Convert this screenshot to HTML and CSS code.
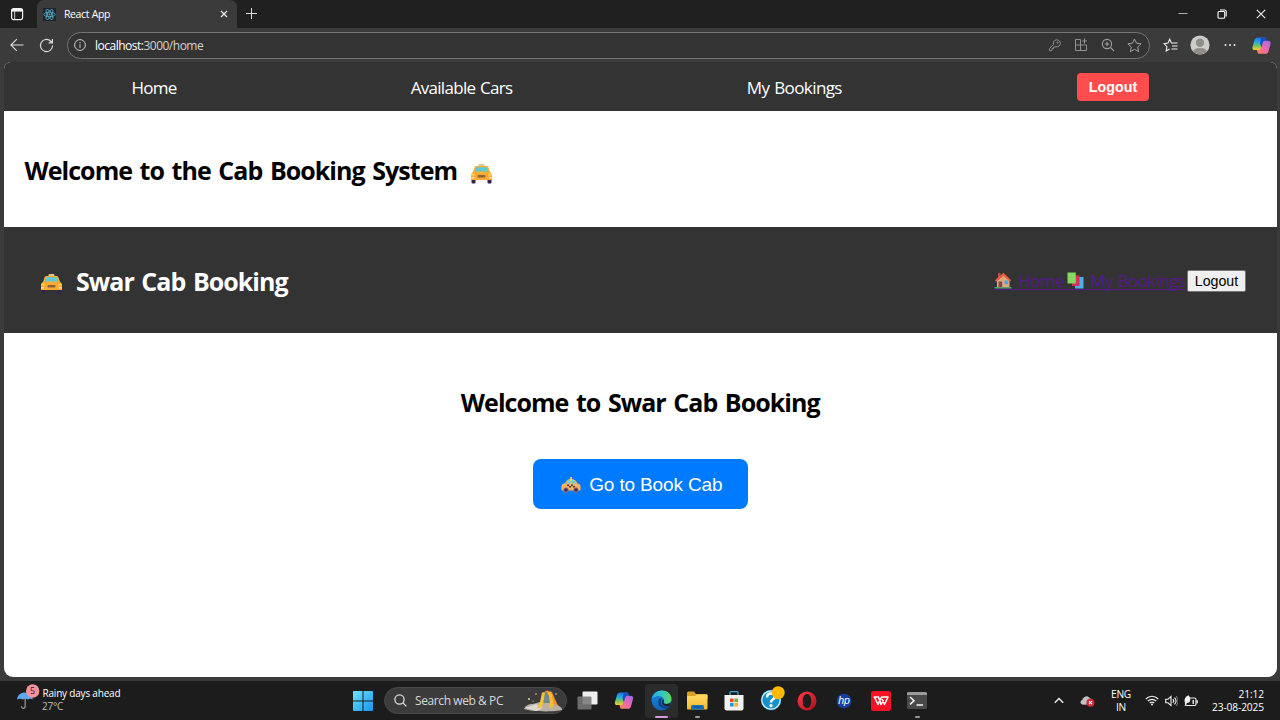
FILE: index.html
```html
<!DOCTYPE html>
<html lang="en">
<head>
<meta charset="utf-8">
<title>React App</title>
<link rel="stylesheet" href="styles.css">
</head>
<body>
<svg width="0" height="0" class="defs">
  <defs>
    <linearGradient id="cpA" x1="0" y1="0" x2="0" y2="1"><stop offset="0" stop-color="#1b72e0"/><stop offset=".35" stop-color="#22a9e8"/><stop offset=".65" stop-color="#6fc55c"/><stop offset="1" stop-color="#f9d02c"/></linearGradient>
    <linearGradient id="cpB" x1="1" y1="0" x2="0" y2="1"><stop offset="0" stop-color="#9a68f2"/><stop offset=".5" stop-color="#ee66b0"/><stop offset="1" stop-color="#ff8a4c"/></linearGradient>
    <linearGradient id="edgeA" x1="0" y1="0" x2="1" y2="0"><stop offset="0" stop-color="#2aa6e6"/><stop offset=".5" stop-color="#31c6c8"/><stop offset="1" stop-color="#63d65b"/></linearGradient>
    <linearGradient id="edgeB" x1="0" y1="0" x2="0" y2="1"><stop offset="0" stop-color="#1d8ede"/><stop offset="1" stop-color="#1261b5"/></linearGradient>
    <linearGradient id="win" x1="0" y1="0" x2="1" y2="1"><stop offset="0" stop-color="#72e2fb"/><stop offset="1" stop-color="#1296ed"/></linearGradient>
    <linearGradient id="folder" x1="0" y1="0" x2="0" y2="1"><stop offset="0" stop-color="#ffdc65"/><stop offset="1" stop-color="#f7b92d"/></linearGradient>
    <linearGradient id="opera" x1="0" y1="0" x2="1" y2="1"><stop offset="0" stop-color="#ff3b45"/><stop offset="1" stop-color="#a90e1c"/></linearGradient>
    <symbol id="copilot" viewBox="0 0 20 20">
      <path d="M6 1.500h6.500c1.200 0 1.800.5 2.100 1.500l.5 2h-1.600c-1.200 0-1.800.6-2.100 1.800L9.800 12.500C9.400 14 8.500 14.800 7 14.800H3C.8 14.800 0 13.500.5 11.500L2.600 4.200C3.100 2.400 4.200 1.500 6 1.500Z" fill="url(#cpA)"/>
      <path d="M14 18.800H8c-1.200 0-1.900-.6-2.200-1.700l-.6-2.300h1.700c1.300 0 2-.7 2.400-2.100l1.700-5.600C11.400 5.700 12.400 5 13.700 5H17c2.200 0 3 1.500 2.500 3.500l-2.100 7.500c-.5 1.800-1.600 2.800-3.400 2.800Z" fill="url(#cpB)"/>
      <path d="M9.500 1.500h3c1.200 0 1.800.5 2.100 1.500l.5 2h-1.400c-1.200 0-2 .6-2.400 1.800L9.900 12 8.500 8Z" fill="#1b4fc4"/>
    </symbol>
    <symbol id="cabfront" viewBox="0 0 22 20">
      <rect x="8" y="0" width="6" height="3" rx="1" fill="#e8c48c"/>
      <path d="M6 2h10c1 0 1.500.5 2 1.500L19.500 8h-17L4 3.500C4.500 2.500 5 2 6 2Z" fill="#f3ae3d"/>
      <path d="M6.200 3.300h9.600L18 8H4Z" fill="#5ccbd3"/>
      <rect x="1" y="15" width="4" height="4.500" rx="1" fill="#33244e"/><rect x="17" y="15" width="4" height="4.500" rx="1" fill="#33244e"/>
      <path d="M3 7.500h16c1.700 1 2.500 2.500 2.500 4.500v4H.5v-4c0-2 .8-3.500 2.500-4.500Z" fill="#fbab33"/>
      <rect x="7" y="11" width="8" height="2.600" rx="1" fill="#88653f"/>
      <path d="M1 9.500h3v2H.7ZM18 9.500h3l.3 2H18Z" fill="#ffd84e"/>
      <path d="M.7 13h3v1.500h-3ZM18.300 13h3v1.500h-3Z" fill="#f5d9c9"/>
    </symbol>
  </defs>
</svg>

<div class="browser">
  <header class="tabstrip">
    <div class="workspace"><svg width="14" height="14" viewBox="0 0 14 14" fill="none" stroke="#f2f2f2" stroke-width="1.200"><rect x="1.600" y="1.600" width="11" height="11" rx="2"/><path d="M2 3.300h10.400" stroke-width="2.600"/><path d="M4.700 4v8.500" stroke-width=".8"/></svg></div>
    <div class="tab">
      <svg width="13" height="13" viewBox="0 0 13 13" fill="none" stroke="#58bcd8" stroke-width=".8"><rect width="13" height="13" fill="#20262d" stroke="none"/><ellipse cx="6.500" cy="6.500" rx="5.600" ry="2.200"/><ellipse cx="6.500" cy="6.500" rx="5.600" ry="2.200" transform="rotate(60 6.500 6.500)"/><ellipse cx="6.500" cy="6.500" rx="5.600" ry="2.200" transform="rotate(120 6.500 6.500)"/><circle cx="6.500" cy="6.500" r=".9" fill="#58bcd8" stroke="none"/></svg>
      <span class="tab-title">React App</span>
      <svg class="tab-close" width="8" height="8" viewBox="0 0 8 8" stroke="#eee" stroke-width="1.200"><path d="M1 1l6 6M7 1l-6 6"/></svg>
    </div>
    <svg class="newtab" width="12" height="12" viewBox="0 0 12 12" stroke="#ddd"><path d="M5.500 0v11M0 5.500h11"/></svg>
    <div class="window-buttons">
      <svg width="10" height="10" viewBox="0 0 10 10" stroke="#aaa"><path d="M.5 4.500h9"/></svg>
      <svg width="10" height="10" viewBox="0 0 10 10" fill="none" stroke="#fff" stroke-width="1.100"><rect x="1" y="2.500" width="6.700" height="6.700" rx="1"/><path d="M3 1h4.800Q9.200 1 9.200 2.500V7.500"/></svg>
      <svg width="10" height="10" viewBox="0 0 10 10" stroke="#eee" stroke-width="1.100"><path d="M.8.8l8.400 8.400M9.200.8L.8 9.200"/></svg>
    </div>
  </header>

  <div class="toolbar">
    <svg width="14" height="14" viewBox="0 0 14 14" fill="none" stroke="#ddd" stroke-width="1.100"><path d="M13.500 7H.9M6.800 1.200L.9 7l5.900 5.800"/></svg>
    <svg class="reload" width="15" height="15" viewBox="0 0 15 15" fill="none" stroke="#ddd" stroke-width="1.200"><path d="M13.600 7.500A6.100 6.100 0 1 1 11.800 3.200L13.300 4.600M13.400 1v3.800H9.600"/></svg>
    <div class="address">
      <svg width="12" height="12" viewBox="0 0 12 12" fill="none" stroke="#ccc"><circle cx="6" cy="6" r="5.400"/><path d="M6 5.300v3.500M6 3.200v1.100"/></svg>
      <span class="url">localhost:<span class="path">3000/home</span></span>
      <div class="address-icons">
        <svg width="14" height="14" viewBox="0 0 14 14" fill="none" stroke="#909090"><path d="M5.500 6.400A3.500 3.500 0 1 1 8 8.700L6.800 9H5.600v1.500H4.200V12l-.6.700H1.500v-2.200Z"/><circle cx="9.500" cy="4.600" r=".6"/></svg>
        <svg width="14" height="14" viewBox="0 0 14 14" fill="none" stroke="#909090"><path d="M6.500 1.500h-5v11h11V7H1.500M6.500 1.500v11M12.500 7v5.500M10.500.5v5M8 3h5"/></svg>
        <svg width="14" height="14" viewBox="0 0 14 14" fill="none" stroke="#a0a0a0" stroke-width="1.100"><circle cx="6" cy="6" r="4.600"/><path d="M9.500 9.500l3.600 3.600M3.700 6h4.600M6 3.700v4.600"/></svg>
        <svg width="15" height="15" viewBox="0 0 15 15" fill="none" stroke="#a0a0a0"><path d="M7.500 1l2 4.200 4.600.6-3.400 3.200.9 4.600-4.100-2.300-4.100 2.300.9-4.600L.9 5.800l4.600-.6Z" stroke-linejoin="round"/></svg>
      </div>
    </div>
    <div class="toolbar-right">
      <svg width="16" height="15" viewBox="0 0 16 15" fill="none" stroke="#eee" stroke-width="1.100"><path d="M8.500 5L6.700 1.200 5 5l-4 .6 2.900 3-.7 4.400L6.500 11M8.200 5h6.300M9 8h5.500M8.500 11h6"/></svg>
      <svg class="avatar" width="20" height="20" viewBox="0 0 20 20"><circle cx="10" cy="10" r="9.600" fill="#cfcdca"/><circle cx="10" cy="7.700" r="4.200" fill="#918e8a"/><path d="M3 16.200C4 13.700 6.500 13 10 13s6 .7 7 3.200a9.500 9.500 0 0 1-14 0Z" fill="#918e8a"/></svg>
      <svg width="12" height="4" viewBox="0 0 12 4" fill="#eee"><circle cx="1.500" cy="2" r="1"/><circle cx="6" cy="2" r="1"/><circle cx="10.500" cy="2" r="1"/></svg>
      <svg class="copilot-button" width="19" height="19"><use href="#copilot"/></svg>
    </div>
  </div>

  <main class="page">
    <nav class="nav">
      <a class="nav-home">Home</a><a class="nav-cars">Available Cars</a><a class="nav-bookings">My Bookings</a>
      <button class="logout">Logout</button>
    </nav>
    <section class="intro">
      <h2 class="intro-title">Welcome to the Cab Booking System</h2>
      <svg width="23" height="20"><use href="#cabfront"/></svg>
    </section>
    <section class="brandbar">
      <svg width="23" height="20"><use href="#cabfront"/></svg>
      <h2 class="brand">Swar Cab Booking</h2>
      <div class="links">
        <a class="link link-home"><svg width="18" height="17" viewBox="0 0 18 17"><path d="M4 1h2.500v5H4Z" fill="#b5563c"/><path d="M3 7l6-5 6.500 5v8.500H3Z" fill="#e2a77e"/><path d="M.8 8.500L9.500.8 17.300 8.500l-1.500 1L9.500 4 2.300 9.700Z" fill="#e65f3d"/><path d="M4.500 9.500h3.700v6H4.500Z" fill="#854b43"/><path d="M10.500 8.500h3.700v3.700h-3.700Z" fill="#4ca9de"/><path d="M.5 15h17v1.500H.5Z" fill="#55a56b"/></svg><span class="link-text">Home</span></a>
        <a class="link link-book"><svg width="17" height="17" viewBox="0 0 17 17"><path d="M8 5h8.500v11.500H8Z" fill="#49aee9"/><path d="M5 3.500h7.500V14H5Z" fill="#d63059"/><path d="M.5.500h8.300v11H.5Z" fill="#86d863"/></svg><span class="link-text">My Bookings</span></a>
        <button class="plain-logout">Logout</button>
      </div>
    </section>
    <section class="hero">
      <h2 class="hero-title">Welcome to Swar Cab Booking</h2>
      <button class="book">
        <svg width="20" height="16" viewBox="0 0 20 16"><path d="M4 7c1-3.500 2.500-5 6-5s5.500 1.500 6.500 5Z" fill="#f2b34d"/><path d="M5 7c1-2.800 2-3.800 4.500-4v4ZM10.900 3c2.500.2 3.600 1.500 4.500 4h-4.500Z" fill="#69d1dc"/><path d="M9.300 0h1.600v4H9.300Z" fill="#ffdf61"/><path d="M2.500 6.500h13.500c2 0 3 .8 3.500 2.500v4.500H.5V9q.3-2 2-2.500Z" fill="#f7b45f"/><path d="M6 7.500h2V9H6ZM10 7.500h2V9h-2ZM8 9h2v1.500H8ZM12 9h2v1.500h-2Z" fill="#473640"/><g fill="#3e3052" stroke="#a67d80"><circle cx="5" cy="13" r="2.300"/><circle cx="15" cy="13" r="2.300"/></g></svg>
        <span>Go to Book Cab</span>
      </button>
    </section>
  </main>
</div>

<footer class="taskbar">
  <div class="weather">
    <svg width="24" height="28" viewBox="0 0 24 28"><path d="M1 15.500C1.500 11 5 8.500 9 8.500s7.500 3 7.800 7c-2-1-3.500-1-5 0-1.700-1-3.400-1-5 0-2-1-3.800-1-5.800 0Z" fill="#5da7ee"/><path d="M9.200 14v8c0 3-3.700 3-3.700.3" fill="none" stroke="#929292" stroke-width="1.300"/><circle cx="16.700" cy="7" r="6.700" fill="#f7919d"/><text x="16.700" y="10.300" text-anchor="middle" class="badge-text">5</text></svg>
    <div class="weather-text"><span class="forecast">Rainy days ahead</span><span class="temp">27°C</span></div>
  </div>
  <div class="apps">
    <div class="app"><svg width="20" height="20" viewBox="0 0 20 20" fill="url(#win)"><path d="M0 1q0-1 1-1h8.500v9.500H0ZM10.500 0H19q1 0 1 1v8.500h-9.500ZM0 10.500h9.500V20H1q-1 0-1-1ZM10.500 10.500H20V19q0 1-1 1h-8.500Z"/></svg></div>
    <div class="search">
      <svg width="13" height="13" viewBox="0 0 13 13" fill="none" stroke="#ddd" stroke-width="1.300"><circle cx="5.500" cy="5.500" r="4.600"/><path d="M8.900 8.900l3.500 3.500"/></svg>
      <span class="search-text">Search web &amp; PC</span>
      <svg class="doodle" width="40" height="22" viewBox="0 0 40 22"><path d="M1 19c1-3 4-5 9-5l7-2 14 0 5 4c2 1 3 2 3 4-6 2-30 2-38-1Z" fill="#b9afa3"/><path d="M2 18l11-4 7 4-7 3Z" fill="#ded8cf"/><path d="M19 3l5-2.500L29 2l6 14-5-2-3-8Z" fill="#f0902f"/><path d="M19 3l5-1 4 11h-9Z" fill="#708794"/><path d="M19 2.500l3 .5-2 11-2 4h-4l3-6Z" fill="#f4c239"/><path d="M25 2l3 0 3 12-2 4h-3l1-5Z" fill="#f4bd35"/><g fill="#d7d0b8"><circle cx="6" cy="9" r="1"/><circle cx="13" cy="4" r=".8"/><circle cx="33" cy="4" r=".8"/><circle cx="10" cy="11" r=".6"/></g></svg>
    </div>
    <div class="app"><svg width="21" height="19" viewBox="0 0 21 19"><rect x="5.500" y=".5" width="15" height="13" rx="1" fill="#eee"/><rect x=".5" y="5.500" width="14" height="13" rx="1" fill="#777" opacity=".88"/></svg></div>
    <div class="app"><svg width="20" height="19"><use href="#copilot"/></svg></div>
    <div class="app active"><svg width="21" height="21" viewBox="0 0 21 21"><circle cx="10.500" cy="10.500" r="10" fill="url(#edgeB)"/><path d="M.6 9.500C1.500 3.500 6 .5 11 .5c6 0 9.500 4.200 9.500 8.500 0 3-2.200 5-5 5-2.400 0-3.500-1-2.500-2.200C14 10 12 6 8 6 4.500 6 1.500 7.500.6 9.500Z" fill="url(#edgeA)"/><path d="M8 9c-2 4 0 8.500 5 9.500 2.500.4 4.700-.6 6.300-2.300-2.400.8-9.300.8-9.300-4.700 0-1.200.7-2 1.300-2.500C10.500 8.300 9 8 8 9Z" fill="#0c438d"/><path d="M13 11.800c-1 1.200.1 2.200 2.500 2.200 2 0 3.500-.9 4.300-2.200l-.8 4c-3 1.500-8 0-8-4 0-1.400.7-2 1.200-2.200.9.300 1 1.500.8 2.200Z" fill="#202428"/></svg><i class="mark wide"></i></div>
    <div class="app"><svg width="21" height="19" viewBox="0 0 21 19"><path d="M0 2q0-1.500 1.500-1.500H7L9 3h10q1.500 0 1.500 1.500V8H0Z" fill="#dca022"/><path d="M0 6q0-1 1-1h7l2-1.500h9.500q1 0 1 1v13q0 1-1 1H1q-1 0-1-1Z" fill="url(#folder)"/><path d="M4 18.500v-3Q4 14 5.500 14h10q1.500 0 1.500 1.500v3Z" fill="#1673bb"/><path d="M6.500 16h8" stroke="#0b4c8a"/></svg><i class="mark"></i></div>
    <div class="app"><svg width="20" height="20" viewBox="0 0 20 20"><path d="M6 5V1.500q0-.8.800-.8h6.400q.8 0 .8.800V5" fill="none" stroke="#3ba7d4" stroke-width="1.300"/><path d="M.5 4h19v13.500q0 2-2 2h-15q-2 0-2-2Z" fill="#f2f2f2"/><path d="M6 7.500h3.600v3.600H6Z" fill="#ec5128"/><path d="M10.400 7.500H14v3.600h-3.600Z" fill="#7db52a"/><path d="M6 11.900h3.600v3.600H6Z" fill="#159bd7"/><path d="M10.400 11.900H14v3.600h-3.600Z" fill="#f4b51c"/></svg></div>
    <div class="app"><svg class="help" width="26" height="25" viewBox="0 0 26 25"><circle cx="12" cy="14" r="10.300" fill="#1691c9"/><circle cx="12" cy="14" r="9.200" fill="none" stroke="#d8eff8" stroke-width="1.200"/><path d="M8 11.500C8 8 10 7.500 12 7.500c4 0 5 4 1.700 6-1.500 1-1.700 1.500-1.700 3" fill="none" stroke="#fff" stroke-width="2.500"/><circle cx="12" cy="19.700" r="1.600" fill="#fff"/><circle cx="19.200" cy="6.700" r="6.500" fill="#ffb900"/></svg></div>
    <div class="app"><svg width="20" height="20" viewBox="0 0 20 20"><path fill-rule="evenodd" d="M10 .5a9.500 9.500 0 1 0 0 19 9.500 9.500 0 0 0 0-19Zm0 2.500c2.700 0 4.200 3 4.200 7s-1.500 7-4.200 7-4.200-3-4.200-7 1.500-7 4.200-7Z" fill="url(#opera)"/></svg></div>
    <div class="app"><svg width="16" height="16" viewBox="0 0 16 16"><circle cx="8" cy="8" r="7.300" fill="#173ea5"/><text x="8" y="11" text-anchor="middle" class="hp-text">hp</text></svg></div>
    <div class="app"><svg width="20" height="20" viewBox="0 0 20 20"><rect width="20" height="20" rx="2.500" fill="#f51225"/><path d="M2.500 6H7.500L10 13.500 12.500 9M3.500 6L7 13.500 10.500 6H17L13.500 13.500 11 8" fill="none" stroke="#fff" stroke-width="1.500" stroke-linejoin="round"/></svg></div>
    <div class="app"><svg width="20" height="17" viewBox="0 0 20 17"><rect width="20" height="17" rx="1.500" fill="#494949"/><path d="M0 3V1.500Q0 0 1.500 0h17Q20 0 20 1.500V3Z" fill="#9b9b9b"/><path d="M3 5l4 3.700-4 3.700M9.500 13H16" fill="none" stroke="#f5f5f5" stroke-width="1.500"/></svg><i class="mark"></i></div>
  </div>
  <div class="tray">
    <svg class="chevron" width="10" height="7" viewBox="0 0 10 7" fill="none" stroke="#eee" stroke-width="1.400"><path d="M.8 5.800L5 1.500l4.200 4.300"/></svg>
    <svg class="cloud" width="15" height="12" viewBox="0 0 15 12"><path d="M3 9.500C0 9.500-.1 5.600 2.500 5 3 1.300 8 .2 9.800 3.300c2 0 3 1.700 3 3.200v3Z" fill="#9a9a9a"/><path d="M2.500 5C3 1.300 8 .2 9.800 3.300 7 3.300 6 6 6.500 9.500H3C0 9.500-.1 5.600 2.500 5Z" fill="#c2c2c2"/><circle cx="10.500" cy="7.700" r="4" fill="#d02a37"/><path d="M9 6.200l3 3M12 6.200l-3 3" stroke="#fff" stroke-width="1.100"/></svg>
    <div class="lang"><span>ENG</span><span>IN</span></div>
    <div class="status">
      <svg width="14" height="11" viewBox="0 0 14 11" fill="none" stroke="#eee" stroke-width="1.200"><path d="M.8 4C4.300.3 9.700.3 13.200 4M2.800 6.200c2.400-2.500 6-2.500 8.400 0M4.800 8.200c1.300-1.300 3.100-1.300 4.400 0"/><circle cx="7" cy="9.600" r="1" fill="#eee" stroke="none"/></svg>
      <svg width="13" height="12" viewBox="0 0 13 12" fill="none" stroke="#eee" stroke-width="1.100"><path d="M.7 4.200H3L6 1.400v9.200L3 7.800H.7ZM7.800 4.200c1 1 1 2.600 0 3.600M9.500 2.700c1.800 1.900 1.800 4.700 0 6.600"/><path d="M11.200 1.200c2.200 2.800 2.200 6.800 0 9.600" stroke="#777"/></svg>
      <svg width="14" height="12" viewBox="0 0 14 12"><rect x="1.500" y="3" width="10.500" height="7.500" rx="1.500" fill="none" stroke="#eee" stroke-width="1.200"/><path d="M13.200 5.300v3" stroke="#eee" stroke-width="1.300"/><path d="M.5 6C.5 3.500 2 1.500 4.300.3 6.500 2.500 7 5.500 5 7.500 3 8.500 1 8 .5 6Z" fill="#f3f3f3"/><path d="M8.500 5H10v4H8.500Z" fill="#ddd"/><path d="M3.500 5.500L1 11" stroke="#eee"/></svg>
    </div>
    <div class="clock"><span class="time">21:12</span><span class="date">23-08-2025</span></div>
  </div>
</footer>
</body>
</html>
```
FILE: styles.css
```css
* { box-sizing: border-box; }
body { margin: 0; width: 1280px; height: 720px; overflow: hidden; display: flex; flex-direction: column; background: #1c1c1c; font-family: "Open Sans", "Noto Sans", sans-serif; color: #fff; }
svg { display: block; flex: none; }
span, a, h2 { white-space: nowrap; }
h2, button { margin: 0; }
.defs { position: absolute; }

.browser { height: 681px; display: flex; flex-direction: column; background: #3b3b3b; }
.tabstrip { height: 28px; display: flex; align-items: center; background: #202020; }
.workspace { width: 37px; height: 28px; display: flex; align-items: center; justify-content: center; padding-right: 3px; }
.tab { width: 200px; height: 28px; display: flex; align-items: center; padding: 0 9px 0 6px; background: #3b3b3b; border-radius: 7px 7px 0 0; }
.tab-title { margin-left: 8px; font-size: 10.5px; letter-spacing: -0.4px; word-spacing: 0.5px; }
.tab-close { margin-left: auto; }
.newtab { margin-left: 9px; }
.window-buttons { margin-left: auto; margin-right: 14px; display: flex; gap: 29px; }
.toolbar { height: 34px; display: flex; align-items: center; padding-left: 10px; }
.reload { margin-left: 15px; }
.address { width: 1083px; height: 27px; margin-left: 13px; padding: 0 7px 0 6px; display: flex; align-items: center; background: #333; border: 1px solid #757575; border-radius: 14px; }
.url { margin-left: 9px; font-size: 12px; letter-spacing: -0.5px; }
.path { color: #d2d2d2; }
.address-icons { margin-left: auto; display: flex; align-items: center; gap: 12.500px; }
.toolbar-right { display: flex; align-items: center; margin-left: 13px; }
.avatar { margin-left: 11px; margin-right: 14px; }
.copilot-button { margin-left: 16px; }

.page { width: 1273.500px; height: 615px; margin-left: 3.500px; overflow: hidden; background: #fff; border-radius: 7px 7px 9px 9px; color: #000; }
.nav { height: 49px; padding: 0 11px; display: flex; align-items: center; justify-content: space-around; background: #333; color: #fff; font-size: 17px; }
.nav a { display: block; padding-top: 1px; }
.nav-home { width: 45px; letter-spacing: -0.75px; }
.nav-cars { width: 102px; letter-spacing: -0.7px; word-spacing: 1px; }
.nav-bookings { width: 96px; letter-spacing: -0.6px; word-spacing: 1px; }
.logout { width: 72px; height: 28px; padding: 0; border: 0; border-radius: 4px; background: #ff4d4d; color: #fff; font: bold 14.300px "Liberation Sans", Arial, sans-serif; }
h2 { font-size: 25px; line-height: 36px; font-weight: 700; letter-spacing: -0.95px; word-spacing: 2px; }
.intro { height: 116px; padding: 41px 0 0 21px; display: flex; align-items: flex-start; }
.intro-title { width: 445.500px; }
.intro svg { margin-top: 12px; }
.brandbar { height: 106px; padding: 36px 31px 0 36.500px; display: flex; align-items: flex-start; background: #333; }
.brandbar > svg { margin-top: 11px; }
.brand { margin-left: 13px; color: #fff; }
.links { margin-left: auto; height: 36px; display: flex; align-items: center; }
.link { height: 17px; display: flex; align-items: center; color: #551a8b; font-size: 17px; border-bottom: 1px solid #551a8b; }
.link-home { width: 73px; }
.link-book { width: 120px; }
.link-text { margin-left: 6px; letter-spacing: -0.6px; word-spacing: 1px; }
.plain-logout { width: 59px; height: 22px; padding: 0; border: 1px solid #777; border-radius: 2px; background: #efefef; color: #000; font: 14.200px "Liberation Sans", Arial, sans-serif; }
.hero { display: flex; flex-direction: column; align-items: center; padding-top: 51px; }
.book { width: 215px; height: 50px; margin-top: 39px; padding: 2px 0 0 3px; display: flex; align-items: center; justify-content: center; gap: 8px; border: 0; border-radius: 8px; background: #007bff; color: #fff; font: 19px "Liberation Sans", Arial, sans-serif; letter-spacing: -0.15px; }

.taskbar { height: 39px; display: flex; background: #1c1c1c; }
.weather { width: 345px; height: 39px; padding: 3px 0 0 16px; display: flex; }
.weather-text { margin: 2px 0 0 2px; display: flex; flex-direction: column; font-size: 10px; line-height: 14px; letter-spacing: -0.2px; }
.forecast { padding-left: 0.500px; }
.temp { color: #bbb; line-height: 12px; }
.badge-text { font: 9px "Open Sans", sans-serif; fill: #35191d; letter-spacing: 0; }
.apps { display: flex; height: 39px; align-items: center; }
.app { width: 36.600px; height: 38px; display: flex; align-items: center; justify-content: center; position: relative; }
.active::before { content: ""; position: absolute; left: 2px; right: 1px; top: 2px; bottom: 2px; border-radius: 4px; background: #2b2b2b; }
.active svg { position: relative; }
.help { margin: -4px 0 0 2px; }
.mark { position: absolute; bottom: 2px; width: 5px; height: 2px; border-radius: 1px; background: #999; }
.wide { width: 13px; background: #d99be0; }
.search { width: 183px; height: 27px; margin: 0 2.500px; padding: 0 3px 0 9px; display: flex; align-items: center; background: #3b3b3b; border: 1px solid #484848; border-radius: 14px; }
.search-text { margin-left: 8px; color: #d8d8d8; font-size: 12px; letter-spacing: -0.42px; }
.doodle { margin-left: auto; }
.hp-text { font: italic 10.500px "Liberation Sans", sans-serif; fill: #fff; }
.tray { margin-left: auto; padding-right: 16px; display: flex; align-items: center; font-size: 10.200px; line-height: 13px; }
.chevron { margin-right: 1px; }
.cloud { margin-left: 15px; }
.lang { width: 22px; margin-left: 15px; display: flex; flex-direction: column; align-items: center; letter-spacing: -0.2px; }
.status { display: flex; align-items: center; gap: 6px; margin-left: 13px; }
.clock { width: 53px; margin-left: 13px; display: flex; flex-direction: column; align-items: flex-end; letter-spacing: -0.12px; }
.lang, .status, .clock { flex: none; }
```
